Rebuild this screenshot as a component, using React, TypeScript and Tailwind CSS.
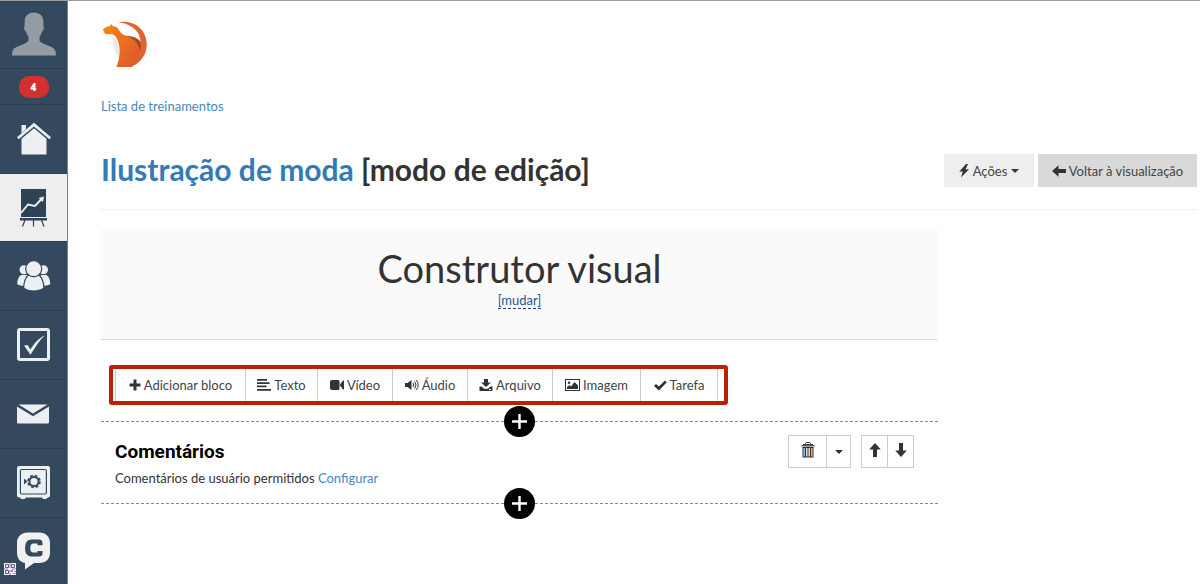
import React from "react";

type IconProps = { className?: string };

function Svg({ w, h, className = "", children }: { w: number; h: number; className?: string; children: React.ReactNode }) {
  return (
    <svg width={w} height={h} viewBox={`0 0 ${w} ${h}`} className={`shrink-0 ${className}`} fill="currentColor" aria-hidden="true">
      {children}
    </svg>
  );
}

/* ---------- sidebar icons ---------- */

const Avatar = () => (
  <Svg w={44} h={44} className="text-[#949ba3]">
    <path d="M22 .5c5.500 0 9.500 3.500 9.300 9 .1 1.500.1 3 0 4.200.9.4.7 1.800.3 3.300-.3 1.300-.8 2.300-1.600 2.300-.4 2.300-1.300 4-2.500 5.400v3.600c.3 2 4 3.600 8.200 5.100C41 35.200 44 36.500 44 43.500H0c0-7 3-8.300 8.300-10.100 4.200-1.500 7.900-3.100 8.200-5.100v-3.600c-1.200-1.400-2.100-3.100-2.500-5.400-.8 0-1.300-1-1.600-2.300-.4-1.500-.6-2.900.3-3.300-.1-1.200-.1-2.700 0-4.200C12.500 4 16.500.5 22 .5z" />
  </Svg>
);

const Home = () => (
  <Svg w={34} h={34}>
    <path d="M4.500 3H9v4.200l-4.500 4.300z" />
    <path d="M17 .8 0 15.300l1.600 2L17 4.400l15.400 12.900 1.600-2z" />
    <path d="M17 6.300 4.500 16.800V32.500h25V16.800z" />
  </Svg>
);

const Board = () => (
  <Svg w={28} h={38} className="text-[#2f4357]">
    <path d="M1 0h25v28H1zM0 29h27v2.500H0z" />
    <path d="M5 31 2.500 37.500M13.500 31v6.500M21.500 31l2.500 6.500" stroke="currentColor" strokeWidth="1.200" />
    <path d="M1 24 8 15.500l7 1.500 7-7.500" fill="none" stroke="#eee" strokeWidth="1.900" />
    <path d="m18.500 9 5.500-1.500-1 5.500z" fill="#eee" />
  </Svg>
);

const People = () => (
  <Svg w={34} h={30}>
    <circle cx="7" cy="8.700" r="4.500" />
    <circle cx="26.500" cy="8.700" r="4.500" />
    <path d="M4 14h6L7.500 25C4 24.700 1 24.200.2 23 .3 19 1.500 15.500 4 14zM29.500 14h-6L26 25c3.500-.3 6.500-.8 7.300-2-.1-4-1.300-7.500-3.800-9z" />
    <g stroke="#34495e" strokeWidth="1.200">
      <path d="M11.500 14h10.500c3 2.500 4.700 8 4.900 13-2 2-6 3-10.200 3S8.800 29 6.600 27c.2-5 1.900-10.500 4.900-13z" />
      <circle cx="16.700" cy="7.700" r="8" />
    </g>
  </Svg>
);

const CheckSquare = () => (
  <Svg w={34} h={34}>
    <rect x="1.500" y="1.500" width="30" height="30" rx="1.500" fill="none" stroke="currentColor" strokeWidth="3" />
    <path d="m7 17.500 3.500-.5 3 4.500C17 15.500 22 10 27.500 7.500 22 13 18 19.500 13.500 26.800z" />
  </Svg>
);

const Mail = () => (
  <Svg w={34} h={20}>
    <path d="M1.500.5h29L16 9.500zM0 2.500 16 12.200 32 2.500v15.700q0 1.300-1.300 1.300H1.300Q0 19.500 0 18.200z" />
  </Svg>
);

const Safe = () => (
  <Svg w={34} h={34}>
    <rect x="0" y="0" width="33" height="31.500" rx="2" />
    <path d="M3 31h6l-1 2H4zM25 31h6l-2 2h-3z" />
    <rect x="3.400" y="3.500" width="26" height="24.500" rx="1.500" fill="none" stroke="#34495e" strokeWidth="1.200" />
    <circle cx="17" cy="15.500" r="4.600" fill="none" stroke="#34495e" strokeWidth="2" />
    <circle cx="17" cy="15.500" r="6" fill="none" stroke="#34495e" strokeWidth="1.600" strokeDasharray="2.700 2.010" />
    <path d="M7 12.500 10.500 15.500l-3.500 3z" fill="#34495e" />
  </Svg>
);

const Chat = () => (
  <Svg w={34} h={38} className="text-[#f1f1f1]">
    <path d="M11 .500h11C29 .500 33 5 33 11v9.500c0 6.500-4 10.500-11 10.500h-5L8 37.500V31C3 30 0 26.500 0 20.500V11C0 5 4 .500 11 .500z" />
    <path d="M25.500 13.200v-2.200q0-3.500-3.500-3.500h-7.500q-6.500 0-6.500 8.500t6.500 8.500H22q3.500 0 3.500-3.200v-2.300h-5v1.500h-4q-3.300 0-3.300-4.500t3.300-4.500h4v1.700z" fill="#34495e" />
  </Svg>
);

const QrBadge = () => (
  <svg width="12" height="12" viewBox="0 0 12 12" className="absolute bottom-[9px] left-1" aria-hidden="true">
    <path d="M0 0h12v12H0z" fill="#f4f4fa" />
    <path d="M1.500 1.500h3v3h-3zM7.500 1.500h3v3h-3zM1.500 7.500h3v3h-3z" fill="none" stroke="#5d5680" />
    <path d="M5.500 0h1v5h-1zM0 5.500h4v1H0zM8 5.500h4v1H8zM7 7h2v2H7zM10 8h2v1h-2zM9 10h3v1H9zM5.500 7h1v5h-1z" fill="#9a7cc8" />
  </svg>
);

const Logo = () => (
  <svg width="46" height="47" viewBox="0 0 46 47" role="img" aria-label="Logo">
    <defs>
      <linearGradient id="body" x1="0" y1="0" x2="1" y2="1">
        <stop offset="0" stopColor="#fb8610" />
        <stop offset="1" stopColor="#da5632" />
      </linearGradient>
      <linearGradient id="shade" x1="0" y1="0" x2="1" y2="0">
        <stop offset="0" stopColor="#d95f20" />
        <stop offset="1" stopColor="#963f25" />
      </linearGradient>
    </defs>
    <path d="M9 14.500c1 8 2.500 16.500 7.500 24 1.500-9-1-18-7.500-24z" fill="#e9e9e9" />
    <path d="M15 1.500C30-2 43.500 8 43.700 23 44 33 38 42 28 46l-4-8c9-4 13.500-9 13.500-17.500C37.500 10 27 2 15 1.500z" fill="#e2632e" />
    <path d="M20.500 14.800C28 14 33.500 16 37.500 20.500 38 25 37.500 29 36 32.500c-2-8-7-13-15.500-17.700z" fill="url(#shade)" />
    <path d="M8.300 3 10 5.300c2.500.2 4.300 1 5.500 3 2 3.700 4 5.200 8 6.700 8 3 13 8 13.500 15.500 0 6.500-3.500 11.500-9 15.500H13.500c3-8 4-15 2.500-22C14.500 17 12 13 7.500 13c-3 .3-5 .5-5.800-.8L0 9c.5-2 3-3 7-4z" fill="url(#body)" />
  </svg>
);

/* ---------- small action icons ---------- */

const Bolt = ({ className }: IconProps) => (
  <Svg w={10} h={14} className={className}><path d="M7 0 .3 7.500h3.500L2 13.500l8-8.200H6.500L9 0z" /></Svg>
);
const ArrowLeft = () => (
  <Svg w={14} h={12}><path d="M0 6 6.500.2V4H14v4H6.500v3.800z" /></Svg>
);
const ArrowUp = () => (
  <Svg w={12} h={14}><path d="m6 0 5.800 6.500H8V14H4V6.500H.2z" /></Svg>
);
const ArrowDown = () => (
  <Svg w={12} h={14}><path d="M6 14 .2 7.500H4V0h4v7.500h3.800z" /></Svg>
);
const Caret = ({ className }: IconProps) => (
  <Svg w={8} h={4} className={className}><path d="M0 0h8L4 4z" /></Svg>
);
const Plus = () => (
  <Svg w={12} h={12}><path d="M4.500.500h3v4h4v3h-4v4h-3v-4h-4v-3h4z" /></Svg>
);
const Lines = () => (
  <Svg w={14} h={12}><path d="M0 0h10v1.700H0zM0 3.300h12.500V5H0zM0 6.600h9.500v1.700H0zM0 10h14v1.700H0z" /></Svg>
);
const Camera = () => (
  <Svg w={14} h={12}><path d="M2 1h6q1.500 0 1.500 1.500v7Q9.500 11 8 11H2Q0 11 0 9V3q0-2 2-2zM10 5.500 13 1.500h1v9h-1l-3-4z" /></Svg>
);
const Speaker = () => (
  <Svg w={14} h={12}>
    <path d="M0 4h2.500L6.500 1v10L2.500 8H0z" />
    <path d="M8 4q1.500 2 0 4M9.700 2.500q2.600 3.500 0 7M11.300 1q3.800 5 0 10" fill="none" stroke="currentColor" strokeWidth="1" />
  </Svg>
);
const Download = () => (
  <Svg w={14} h={12}><path d="M5 0h4v3.500h3L7 8 2 3.500h3zM.5 7.500h2L5 9.700h4l2.500-2.200h2V12H.5zM10 10v1h2v-1z" fillRule="evenodd" /></Svg>
);
const Picture = () => (
  <Svg w={15} h={12}>
    <rect x=".5" y=".5" width="14" height="11" fill="none" stroke="currentColor" />
    <circle cx="4" cy="3.700" r="1.200" />
    <path d="M2 10V8l2.500-2 1.500 1.500L9.500 3 13 6.500V10z" />
  </Svg>
);
const Check = () => (
  <Svg w={13} h={11}><path d="M0 6 2 4l2.800 2.500L11 .5l1.800 1.800L5 10.500z" /></Svg>
);
const Trash = () => (
  <Svg w={14} h={16}>
    <path d="M4.500 2.500V1.500Q4.500.500 5.500.500h3q1 0 1 1v1" fill="none" stroke="currentColor" />
    <path d="M2 2h10v1H2z" />
    <path d="M.5 3h13v1.600H.5z" fill="#666" />
    <path d="M1.500 5h11v10.500h-11z" />
    <path d="M3.200 6v8.500" stroke="#83b9ef" strokeWidth="1.600" />
    <path d="M5.800 6v8.500M8.200 6v8.500" stroke="#f6efe2" strokeWidth="1.400" />
    <path d="M10.800 6v8.500" stroke="#e4ac62" strokeWidth="1.600" />
  </Svg>
);

const navItems = [
  { label: "Início", icon: <Home />, cell: "h-[69px] border-b" },
  { label: "Treinamentos", icon: <Board />, cell: "h-[68px] border-b bg-[#eee]" },
  { label: "Usuários", icon: <People />, cell: "h-[69px] border-b" },
  { label: "Tarefas", icon: <CheckSquare />, cell: "h-[69px] border-b" },
  { label: "Mensagens", icon: <Mail />, cell: "h-[69px] border-b" },
  { label: "Vendas", icon: <Safe />, cell: "h-[69px] border-b" },
  { label: "Chat", icon: <Chat />, cell: "h-[66px]" },
];

const blocks = [
  { label: "Adicionar bloco", icon: <Plus /> },
  { label: "Texto", icon: <Lines /> },
  { label: "Vídeo", icon: <Camera /> },
  { label: "Áudio", icon: <Speaker /> },
  { label: "Arquivo", icon: <Download /> },
  { label: "Imagem", icon: <Picture /> },
  { label: "Tarefa", icon: <Check /> },
];

function InsertDivider() {
  return (
    <div className="flex h-8 items-center">
      <span className="h-0 flex-1 border-t border-dashed border-[#888]" />
      <button aria-label="Inserir bloco" className="flex size-[31px] items-center justify-center rounded-full bg-black text-white">
        <svg width="15" height="15" viewBox="0 0 15 15" fill="currentColor" aria-hidden="true">
          <path d="M6.300 0h2.400v6.300H15v2.400H8.700V15H6.300V8.700H0V6.300h6.300z" />
        </svg>
      </button>
      <span className="h-0 flex-1 border-t border-dashed border-[#888]" />
    </div>
  );
}

export default function App() {
  return (
    <div className="flex min-h-screen border-t border-[#9b9da3] bg-white font-['Lato','Open_Sans',sans-serif] text-[13px] leading-5 text-[#333]">
      <nav className="relative flex w-[68px] shrink-0 flex-col border-r border-[#71808f] bg-[#34495e] text-[#ecf0f1]">
        <a href="#perfil" aria-label="Perfil" className="flex h-[68px] justify-center border-b border-[#2b3d50] pt-[11px]">
          <Avatar />
        </a>
        <a href="#avisos" className="flex h-9 items-center justify-center border-b border-[#2b3d50]">
          <span className="flex h-[22px] w-[30px] items-center justify-center rounded-[10px] bg-[#d3302f] font-['Open_Sans'] text-[10px] font-extrabold text-white">4</span>
        </a>
        {navItems.map((item) => (
          <a
            key={item.label}
            href="#menu"
            aria-label={item.label}
            className={`flex items-center justify-center border-[#2b3d50] pl-px ${item.cell}`}
          >
            {item.icon}
          </a>
        ))}
        <QrBadge />
      </nav>

      <main className="min-w-0 flex-1 pt-5 pr-[3px] pl-[33px]">
        <a href="#inicio" className="ml-[2px] block w-fit"><Logo /></a>
        <a href="#treinamentos" className="mt-7 block w-fit text-[#4a86bd]">Lista de treinamentos</a>

        <header className="mt-9 flex items-start justify-between gap-4 border-b border-[#eee] pb-[22px]">
          <h1 className="py-px text-[30px] leading-8 font-bold">
            <a href="#curso" className="text-[#337ab7]">Ilustração de moda</a> [modo de edição]
          </h1>
          <div className="mt-[2px] flex gap-1 whitespace-nowrap">
            <button className="flex h-[33px] w-[90px] items-center justify-center gap-1 bg-[#eee]">
              <Bolt /> <span className="text-[#444]">Ações</span> <Caret />
            </button>
            <a href="#visualizar" className="flex h-[33px] w-[159px] items-center justify-center gap-[3px] bg-[#d9d9d9]">
              <ArrowLeft /> <span className="text-[#444]">Voltar à visualização</span>
            </a>
          </div>
        </header>

        <div className="mt-[19px] w-[calc(75%+15px)]">
          <section className="flex h-[111px] flex-col items-center border-b border-[#ddd] bg-[#fafafa] pt-[15px]">
            <h2 className="text-[38px] leading-[48px]">Construtor visual</h2>
            <button className="border-b border-dashed border-[#2a3f9d] leading-4 text-[#1f559b]">[mudar]</button>
          </section>

          <div className="mt-[25px] ml-2 flex w-fit rounded-[3px] border-4 border-[#b82105] pr-[6px] pl-[2px]">
            <div className="grid h-8 grid-cols-[130px_72px_75px_75px_85px_88px_76px] divide-x divide-[#ccc] border-x border-[#ccc]">
              {blocks.map((block) => (
                <button key={block.label} className="flex items-center justify-center gap-[3px] whitespace-nowrap">
                  {block.icon}
                  <span className="text-[#444]">{block.label}</span>
                </button>
              ))}
            </div>
          </div>

          <InsertDivider />
          <section className="flex h-[50px] items-start justify-between pr-6 pl-[14px]">
            <div className="pt-[3px]">
              <h3 className="font-['Roboto'] text-[19px] leading-6 font-bold text-black">Comentários</h3>
              <p className="pt-1">
                Comentários de usuário permitidos <a href="#configurar" className="text-[#4a86bd]">Configurar</a>
              </p>
            </div>
            <div className="-mt-[2px] flex gap-[10px]">
              <div className="flex h-[33px] divide-x divide-[#ccc] border border-[#ccc]">
                <button aria-label="Excluir" className="flex w-[38px] items-center justify-center pb-1"><Trash /></button>
                <button aria-label="Mais opções" className="flex w-[23px] items-center justify-center"><Caret /></button>
              </div>
              <div className="flex h-[33px] divide-x divide-[#ccc] border border-[#ccc]">
                <button aria-label="Mover para cima" className="flex w-[26px] items-center justify-center pb-1"><ArrowUp /></button>
                <button aria-label="Mover para baixo" className="flex w-[25px] items-center justify-center pb-1"><ArrowDown /></button>
              </div>
            </div>
          </section>
          <InsertDivider />
        </div>
      </main>
    </div>
  );
}
